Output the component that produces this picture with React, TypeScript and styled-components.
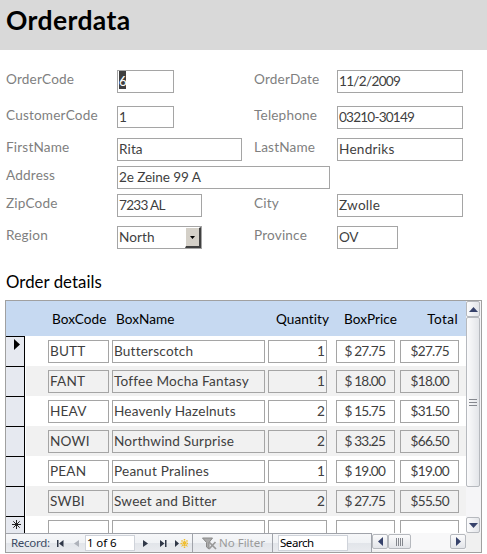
import React from "react";
import styled, { createGlobalStyle } from "styled-components";

const GlobalStyle = createGlobalStyle`
  * { box-sizing: border-box; }
  html, body { margin: 0; background: #fff; }
  body { font-family: Lato, "Liberation Sans", sans-serif; font-size: 13.6px; color: #3f3f3f; overflow: hidden; }
`;

const Window = styled.div`
  width: 487px;
  height: 554px;
  overflow: hidden;
  background: #fff;
`;

const Header = styled.header`
  height: 50px;
  padding: 0 0 0 6px;
  background: #d9d9d9;
`;

const Title = styled.h1`
  margin: 0;
  font-size: 26.5px;
  line-height: 40px;
  font-weight: 700;
  letter-spacing: 0.4px;
  color: #000;
`;

const Form = styled.form`
  display: grid;
  grid-template-columns: 111px 137px 83px 126px;
  grid-template-rows: 36px 32px 28px 28px 32px 23px;
  margin: 20px 0 0 6px;
`;

const Label = styled.label`
  line-height: 19px;
  color: #7f7f7f;
  white-space: nowrap;
  letter-spacing: 0.17px;
`;

const Field = styled.div<{ $w: number; $h?: number; $ls?: number; $span?: number }>`
  display: flex;
  width: ${(p) => p.$w}px;
  height: ${(p) => p.$h ?? 23}px;
  grid-column: ${(p) => (p.$span ? `span ${p.$span}` : "auto")};
  padding-left: 1px;
  border: 1px solid #a5a5a5;
  line-height: 20px;
  white-space: nowrap;
  letter-spacing: ${(p) => p.$ls ?? 0.1}px;
`;

const Selected = styled.span`
  height: 18px;
  width: 7px;
  background: #3f3f3f;
  color: #fff;
  line-height: 20px;
  letter-spacing: -0.8px;
`;

const DropButton = styled.span`
  display: flex;
  align-items: center;
  justify-content: center;
  width: 16px;
  height: 21px;
  margin-left: auto;
  background: #d4d0c8;
  border: solid;
  border-width: 1px 2px 2px 1px;
  border-color: #fff #404040 #404040 #fff;
`;

const SubTitle = styled.h2`
  margin: 22px 0 0 6px;
  height: 29px;
  font-size: 16.8px;
  font-weight: 400;
  line-height: 22px;
  letter-spacing: 0.05px;
  color: #000;
`;

const Subform = styled.section`
  display: grid;
  grid-template-columns: 460px 15px;
  grid-template-rows: 232px 19px;
  width: 477px;
  height: 253px;
  margin-left: 5px;
  border: 1px solid #a0a0a0;
  background: #f0f0f0;
`;

const Sheet = styled.div`
  overflow: hidden;
  background: #fff;
`;

const HeadRow = styled.div`
  display: grid;
  grid-template-columns: 64px 156px 68px 64px 59px;
  height: 35px;
  padding: 9px 0 0 42px;
  line-height: 19px;
  background: #c6d9f1;
  color: #000;
`;

const HeadCell = styled.span<{ $right?: number; $pad?: number; $ls?: number }>`
  white-space: nowrap;
  letter-spacing: ${(p) => p.$ls ?? 0.05}px;
  padding-left: ${(p) => p.$pad ?? 0}px;
  margin-right: ${(p) => p.$right ?? 0}px;
  text-align: ${(p) => (p.$right === undefined ? "left" : "right")};
`;

const Row = styled.div`
  display: flex;
  height: 30px;
`;

const Selector = styled.div`
  width: 19px;
  height: 30px;
  border-top: 1px solid #000;
  border-right: 1px solid #000;
  background: #e6e9f0;
`;

const Cells = styled.div<{ $alt: boolean }>`
  display: flex;
  flex: 1;
  margin-left: 1px;
  padding: 4px 0 0 22px;
  background: ${(p) => (p.$alt ? "#f1f1f1" : "#fff")};
`;

const Cell = styled.div<{ $w: number; $gap: number; $right?: number; $ls?: number }>`
  width: ${(p) => p.$w}px;
  height: 23px;
  margin-right: ${(p) => p.$gap}px;
  padding: 0 ${(p) => p.$right ?? 0}px 0 1px;
  border: 1px solid #a5a5a5;
  line-height: 20px;
  white-space: nowrap;
  letter-spacing: ${(p) => p.$ls ?? 0.15}px;
  text-align: ${(p) => (p.$right === undefined ? "left" : "right")};
`;

const VScroll = styled.div`
  display: flex;
  flex-direction: column;
  background: #f5f5f7;
`;

const ScrollPart = styled.div<{ $w?: number; $h: number; $side?: boolean; $end?: boolean }>`
  display: flex;
  align-items: center;
  justify-content: center;
  width: ${(p) => p.$w ?? 14}px;
  height: ${(p) => p.$h}px;
  margin-left: ${(p) => (p.$end && p.$side ? "auto" : 0)};
  margin-top: ${(p) => (p.$end && !p.$side ? "auto" : 0)};
  border: 1px solid #b6b9be;
  border-radius: 2px;
  background: linear-gradient(${(p) => (p.$side ? "180deg" : "90deg")}, #fbfbfc, #e3e5e9);
`;

const NavBar = styled.div`
  display: flex;
  height: 19px;
`;

const NavTools = styled.div`
  display: grid;
  grid-template-columns: 47px 15px 17px 50px 20px 17px 20px 8px 18px 54px 6px 70px;
  align-items: center;
  width: 366px;
  height: 19px;
  border-top: 1px solid #a0a3aa;
  border-right: 1px solid #a0a3aa;
  background: linear-gradient(#f6f7f9, #f0f2f5 50%, #e2e5ea 52%, #e9ebef);
  font-family: "Noto Sans", sans-serif;
  font-size: 11.5px;
  line-height: 16px;
`;

const NavText = styled.span<{ $pad: number; $muted?: boolean; $ls?: number }>`
  padding-left: ${(p) => p.$pad}px;
  white-space: nowrap;
  letter-spacing: ${(p) => p.$ls ?? 0}px;
  color: ${(p) => (p.$muted ? "#9a9a9a" : "#3b4a63")};
`;

const NavBox = styled.span<{ $ls?: number }>`
  height: 16px;
  padding-left: 1px;
  border: 1px solid #cfd3da;
  background: #fff;
  color: #000;
  line-height: 14px;
  white-space: nowrap;
  letter-spacing: ${(p) => p.$ls ?? 0}px;
`;

const Divider = styled.span`
  width: 1px;
  height: 18px;
  background: #a0a3aa;
`;

const Icon = styled.svg`
  display: block;
  justify-self: center;
`;

const HScroll = styled.div`
  display: flex;
  align-items: center;
  width: 94px;
  height: 17px;
  background: #f8f8f9;
`;

const Arrow = ({ d }: { d: string }) => (
  <Icon width="9" height="9" viewBox="0 0 9 9">
    <path d={d} fill="#36426b" />
  </Icon>
);

const Grip = ({ vertical }: { vertical?: boolean }) => (
  <Icon width="8" height="8" viewBox="0 0 8 8">
    <path
      d={vertical ? "M.5 0v8M2.5 0v8M4.5 0v8M6.5 0v8" : "M0 1.5h8M0 4.5h8M0 7.5h8"}
      stroke="#85888f"
      fill="none"
    />
  </Icon>
);

const rows = [
  ["BUTT", "Butterscotch", "1", "$ 27.75", "$27.75"],
  ["FANT", "Toffee Mocha Fantasy", "1", "$ 18.00", "$18.00"],
  ["HEAV", "Heavenly Hazelnuts", "2", "$ 15.75", "$31.50"],
  ["NOWI", "Northwind Surprise", "2", "$ 33.25", "$66.50"],
  ["PEAN", "Peanut Pralines", "1", "$ 19.00", "$19.00"],
  ["SWBI", "Sweet and Bitter", "2", "$ 27.75", "$55.50"],
  ["", "", "", "", ""],
];

export default function App() {
  return (
    <Window>
      <GlobalStyle />
      <Header>
        <Title>Orderdata</Title>
      </Header>
      <Form>
        <Label>OrderCode</Label>
        <Field $w={57}><Selected>6</Selected></Field>
        <Label>OrderDate</Label>
        <Field $w={126} $ls={-0.7}>11/2/2009</Field>

        <Label>CustomerCode</Label>
        <Field $w={57} $h={22}>1</Field>
        <Label>Telephone</Label>
        <Field $w={126} $ls={-0.8}>03210-30149</Field>

        <Label>FirstName</Label>
        <Field $w={125}>Rita</Field>
        <Label>LastName</Label>
        <Field $w={126} $ls={0.25}>Hendriks</Field>

        <Label>Address</Label>
        <Field $w={213} $span={3} $ls={-0.1}>2e Zeine 99 A</Field>

        <Label>ZipCode</Label>
        <Field $w={85} $ls={-0.7}>7233 AL</Field>
        <Label>City</Label>
        <Field $w={126} $ls={0.25}>Zwolle</Field>

        <Label>Region</Label>
        <Field $w={85}>
          North
          <DropButton><Icon width="5" height="3" viewBox="0 0 5 3"><path d="M0 0h5L2.5 3z" fill="#000" /></Icon></DropButton>
        </Field>
        <Label>Province</Label>
        <Field $w={61} $ls={-0.3}>OV</Field>
      </Form>

      <SubTitle>Order details</SubTitle>

      <Subform>
        <Sheet>
          <HeadRow>
            <HeadCell $pad={4}>BoxCode</HeadCell>
            <HeadCell $pad={4}>BoxName</HeadCell>
            <HeadCell $right={7}>Quantity</HeadCell>
            <HeadCell $right={3}>BoxPrice</HeadCell>
            <HeadCell $right={1} $ls={0.4}>Total</HeadCell>
          </HeadRow>
          {rows.map((r, i) => (
            <Row key={i}>
              <Selector>
                {i === 0 && <Icon width="18" height="16"><path d="M8 2v11l6-5.5z" fill="#000" /></Icon>}
                {i === 6 && (
                  <Icon width="18" height="16" viewBox="0 0 18 16">
                    <path d="M10.5 3v9M6 7.500h9M7.300 4.300l6.400 6.400M13.700 4.300l-6.400 6.400" stroke="#222" fill="none" />
                  </Icon>
                )}
              </Selector>
              <Cells $alt={i % 2 === 1}>
                <Cell $w={61} $gap={3}>{r[0]}</Cell>
                <Cell $w={153} $gap={3} $ls={0.2}>{r[1]}</Cell>
                <Cell $w={59} $gap={9} $right={1}>{r[2]}</Cell>
                <Cell $w={59} $gap={5} $right={9} $ls={-0.8}>{r[3]}</Cell>
                <Cell $w={59} $gap={0} $right={9} $ls={-0.7}>{r[4]}</Cell>
              </Cells>
            </Row>
          ))}
        </Sheet>
        <VScroll>
          <ScrollPart $h={16}><Arrow d="M0 7L4.5 2 9 7z" /></ScrollPart>
          <ScrollPart $h={170}><Grip /></ScrollPart>
          <ScrollPart $h={16} $end><Arrow d="M0 2L4.5 7 9 2z" /></ScrollPart>
        </VScroll>
        <NavBar>
          <NavTools>
            <NavText $pad={5} $ls={-0.3}>Record:</NavText>
            <Icon width="7" height="7"><path d="M0 0h1.5v7H0zM6.5 0v7L2 3.5z" fill="#303848" /></Icon>
            <Icon width="5" height="7"><path d="M5 0v7L0 3.5z" fill="#aeb2ba" /></Icon>
            <NavBox $ls={-0.1}>1 of 6</NavBox>
            <Icon width="5" height="7"><path d="M0 0v7l5-3.5z" fill="#303848" /></Icon>
            <Icon width="7" height="7"><path d="M0 0v7l4.5-3.5zM5 0h1.500v7H5z" fill="#303848" /></Icon>
            <Icon width="14" height="9">
              <path d="M0 1v7l4-3.5z" fill="#303848" />
              <path d="M9.5 0v9M5.500 4.500h8M6.500 1.500l6 6M12.500 1.500l-6 6" stroke="#f0bd2c" strokeWidth="1.500" strokeDasharray="1.500 .5" fill="none" />
            </Icon>
            <Divider />
            <Icon width="15" height="13" viewBox="0 0 15 13">
              <path d="M.5 1h10L7 5.500V12L4.500 10V5.500z" fill="#aaa" stroke="#888" />
              <path d="M7 5l7 7M13.500 5L7 12" stroke="#999" strokeWidth="1.700" />
            </Icon>
            <NavText $pad={1} $muted>No Filter</NavText>
            <Divider />
            <NavBox $ls={-0.45}>Search</NavBox>
          </NavTools>
          <HScroll>
            <ScrollPart $side $w={16} $h={15}><Arrow d="M7 0L2 4.5 7 9z" /></ScrollPart>
            <ScrollPart $side $w={23} $h={15}><Grip vertical /></ScrollPart>
            <ScrollPart $side $end $w={16} $h={15}><Arrow d="M2 0l5 4.500L2 9z" /></ScrollPart>
          </HScroll>
        </NavBar>
      </Subform>
    </Window>
  );
}
